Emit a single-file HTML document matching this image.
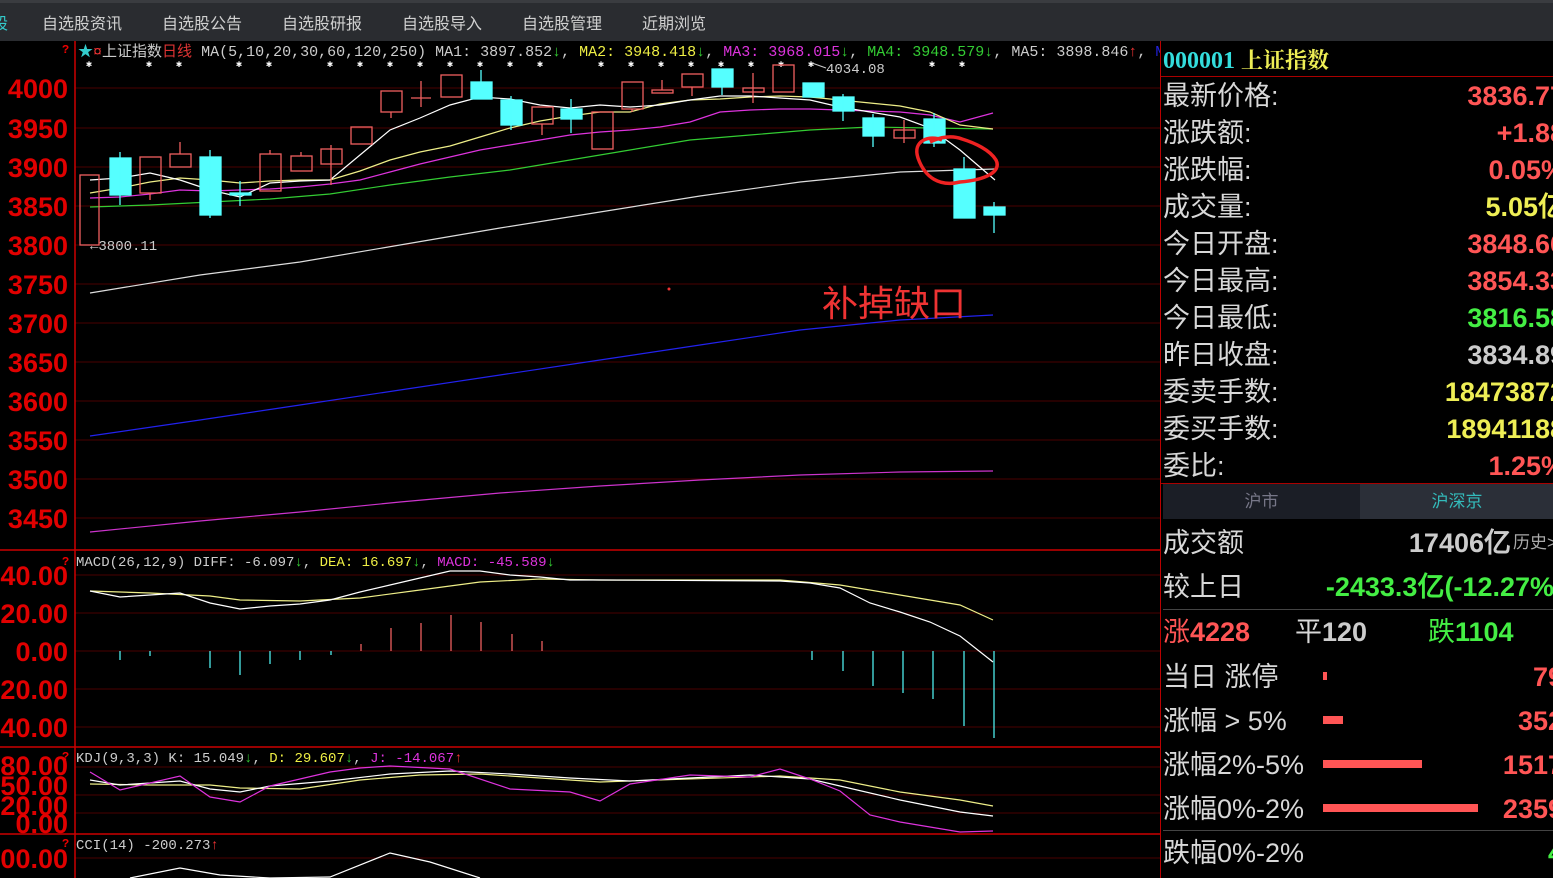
<!DOCTYPE html>
<html><head><meta charset="utf-8"><style>
*{margin:0;padding:0;box-sizing:border-box}
body{width:1553px;height:878px;background:#000;overflow:hidden;position:relative;font-family:"Liberation Sans","Noto Sans CJK SC",sans-serif}
.top{position:absolute;left:0;top:0;width:1553px;height:41px;background:#2a2c30;border-top:3px solid #3a3c40}
.top span{position:absolute;top:7px;font-size:16px;color:#d0d0d0}
.rp{position:absolute;left:1160px;top:41px;width:393px;height:837px;border-left:1px solid #b00;overflow:hidden}
.row{position:absolute;left:2px;width:400px;height:37px;font-size:27px;color:#d8d8d8;line-height:37px}
.row b{position:absolute;right:-2px;top:0;font-family:"Liberation Sans",sans-serif;font-weight:bold;font-size:27px}
</style></head><body>
<div class="top">
<span style="left:-8px;color:#3cc">股</span>
<span style="left:42px">自选股资讯</span><span style="left:162px">自选股公告</span><span style="left:282px">自选股研报</span><span style="left:402px">自选股导入</span><span style="left:522px">自选股管理</span><span style="left:642px">近期浏览</span>
</div>
<svg width="1160" height="837" style="position:absolute;left:0;top:41px" viewBox="0 41 1160 837" font-family="Liberation Mono, Noto Sans CJK SC, monospace">
<g stroke="#4a0000" stroke-width="1">
<line x1="75" y1="88" x2="1160" y2="88"/><line x1="75" y1="128" x2="1160" y2="128"/><line x1="75" y1="167" x2="1160" y2="167"/><line x1="75" y1="206" x2="1160" y2="206"/><line x1="75" y1="245" x2="1160" y2="245"/><line x1="75" y1="284" x2="1160" y2="284"/><line x1="75" y1="323" x2="1160" y2="323"/><line x1="75" y1="362" x2="1160" y2="362"/><line x1="75" y1="401" x2="1160" y2="401"/><line x1="75" y1="440" x2="1160" y2="440"/><line x1="75" y1="479" x2="1160" y2="479"/><line x1="75" y1="518" x2="1160" y2="518"/>
<line x1="75" y1="575" x2="1160" y2="575"/><line x1="75" y1="613" x2="1160" y2="613"/><line x1="75" y1="651" x2="1160" y2="651"/><line x1="75" y1="689" x2="1160" y2="689"/><line x1="75" y1="727" x2="1160" y2="727"/>
<line x1="75" y1="767" x2="1160" y2="767"/><line x1="75" y1="795" x2="1160" y2="795"/><line x1="75" y1="813" x2="1160" y2="813"/><line x1="75" y1="858" x2="1160" y2="858"/>
</g>
<g stroke="#c00" stroke-width="1.5">
<line x1="75" y1="41" x2="75" y2="878"/><line x1="0" y1="550" x2="1160" y2="550"/><line x1="0" y1="747" x2="1160" y2="747"/><line x1="0" y1="834" x2="1160" y2="834"/>
</g>
<g fill="#e00000" font-family="Liberation Sans, sans-serif" font-weight="bold" font-size="27" text-anchor="end">
<text x="68" y="98">4000</text><text x="68" y="138">3950</text><text x="68" y="177">3900</text><text x="68" y="216">3850</text><text x="68" y="255">3800</text><text x="68" y="294">3750</text><text x="68" y="333">3700</text><text x="68" y="372">3650</text><text x="68" y="411">3600</text><text x="68" y="450">3550</text><text x="68" y="489">3500</text><text x="68" y="528">3450</text>
<text x="68" y="585">40.00</text><text x="68" y="623">20.00</text><text x="68" y="661">0.00</text><text x="68" y="699">20.00</text><text x="68" y="737">40.00</text>
<text x="68" y="775">80.00</text><text x="68" y="795">50.00</text><text x="68" y="815">20.00</text><text x="68" y="833">0.00</text><text x="68" y="868">00.00</text>
</g>
<g fill="#e00" font-size="12" font-weight="bold"><text x="62" y="53">?</text><text x="62" y="565">?</text><text x="62" y="760">?</text><text x="62" y="847">?</text></g>
<text x="78" y="56" font-size="15" fill="#ccc"><tspan fill="#3cc">★</tspan><tspan fill="#e33">¤</tspan><tspan fill="#ccc">上证指数</tspan><tspan fill="#d33">日线</tspan> MA(5,10,20,30,60,120,250) MA1: 3897.852<tspan fill="#3c3">↓</tspan>, <tspan fill="#ee4">MA2: 3948.418</tspan><tspan fill="#3c3">↓</tspan>, <tspan fill="#d3d">MA3: 3968.015</tspan><tspan fill="#3c3">↓</tspan>, <tspan fill="#3c3">MA4: 3948.579↓</tspan>, MA5: 3898.846<tspan fill="#e33">↑</tspan>, <tspan fill="#22d">MA6</tspan></text>
<g fill="#fff" font-size="10"><text x="86" y="67">✱</text><text x="146" y="67">✱</text><text x="176" y="67">✱</text><text x="236" y="67">✱</text><text x="266" y="67">✱</text><text x="327" y="67">✱</text><text x="357" y="67">✱</text><text x="387" y="67">✱</text><text x="417" y="67">✱</text><text x="447" y="67">✱</text><text x="477" y="67">✱</text><text x="507" y="67">✱</text><text x="537" y="67">✱</text><text x="598" y="67">✱</text><text x="628" y="67">✱</text><text x="658" y="67">✱</text><text x="688" y="67">✱</text><text x="718" y="67">✱</text><text x="748" y="67">✱</text><text x="778" y="67">✱</text><text x="808" y="67">✱</text><text x="929" y="67">✱</text><text x="959" y="67">✱</text></g>
<text x="826" y="73" font-size="14" fill="#ccc">4034.08</text>
<line x1="812" y1="63" x2="826" y2="68" stroke="#ccc"/>
<text x="90" y="250" font-size="14" fill="#ccc">←3800.11</text>
<g fill="none" stroke-width="1.2">
<polyline stroke="#ddd" points="90,293 200,275 300,262 400,245 500,228 600,212 700,196 800,182 900,172 995,169"/>
<polyline stroke="#22e" points="90,436 200,420 300,405 400,390 500,375 600,360 700,345 800,330 900,320 993,315"/>
<polyline stroke="#c3c" points="90,532 200,521 300,512 400,502 500,493 600,486 700,480 800,475 900,472 993,471"/>
<polyline stroke="#3c3" points="90,207 150,205 210,202 270,199 330,194 390,185 450,177 510,170 570,160 630,150 690,140 750,135 810,130 870,127 930,128 993,129"/>
<polyline stroke="#d3d" points="90,198 120,197 150,194 180,190 210,191 240,190 270,189 300,187 330,184 360,180 390,172 420,164 450,157 480,150 510,145 540,140 570,135 600,132 630,130 660,127 690,122 720,112 750,110 780,109 810,109 840,110 870,111 900,112 930,115 960,122 993,113"/>
<polyline stroke="#ee8" points="90,193 120,188 150,182 180,178 210,180 240,183 270,181 300,180 330,180 360,171 390,160 420,152 450,146 480,137 510,128 540,121 570,116 600,112 630,112 660,104 690,100 720,99 750,97 780,96 810,97 840,100 870,103 900,106 930,112 960,125 993,129"/>
<polyline stroke="#fff" points="90,180 120,178 150,173 180,180 210,190 240,197 270,183 300,181 330,180 360,155 390,130 420,118 450,105 480,97 510,99 540,105 570,108 600,105 630,107 660,105 690,100 720,96 750,96 780,98 810,100 840,107 870,112 900,117 930,128 960,150 995,180"/>
</g>
<g stroke="#f06060" stroke-width="1.3" fill="none">
<rect x="80" y="175" width="19" height="70"/>
<rect x="140" y="157" width="21" height="36"/><line x1="150" y1="193" x2="150" y2="200"/>
<rect x="170" y="154" width="21" height="13"/><line x1="180" y1="142" x2="180" y2="154"/>
<rect x="260" y="154" width="21" height="37"/><line x1="270" y1="150" x2="270" y2="154"/>
<rect x="291" y="156" width="21" height="15"/><line x1="301" y1="152" x2="301" y2="156"/>
<rect x="321" y="149" width="21" height="15"/><line x1="331" y1="145" x2="331" y2="185"/>
<rect x="351" y="127" width="21" height="17"/>
<rect x="381" y="91" width="21" height="21"/><line x1="391" y1="112" x2="391" y2="118"/>
<line x1="411" y1="98" x2="431" y2="98"/><line x1="421" y1="81" x2="421" y2="107"/>
<rect x="441" y="75" width="21" height="22"/>
<rect x="532" y="107" width="21" height="17"/><line x1="542" y1="124" x2="542" y2="135"/>
<rect x="592" y="112" width="21" height="37"/>
<rect x="622" y="82" width="21" height="27"/><line x1="632" y1="109" x2="632" y2="112"/>
<rect x="652" y="90" width="21" height="3"/><line x1="662" y1="80" x2="662" y2="90"/>
<rect x="682" y="74" width="21" height="13"/><line x1="692" y1="87" x2="692" y2="96"/>
<rect x="743" y="88" width="21" height="4"/><line x1="753" y1="73" x2="753" y2="103"/>
<rect x="773" y="65" width="21" height="27"/>
<rect x="894" y="130" width="21" height="8"/><line x1="904" y1="120" x2="904" y2="143"/>
</g>
<g fill="#5ff" stroke="#5ff" stroke-width="1.3">
<rect x="110" y="158" width="21" height="37"/><line x1="120" y1="152" x2="120" y2="205"/>
<rect x="200" y="157" width="21" height="58"/><line x1="210" y1="150" x2="210" y2="218"/>
<rect x="230" y="193" width="21" height="2"/><line x1="240" y1="181" x2="240" y2="206"/>
<rect x="471" y="82" width="21" height="17"/><line x1="481" y1="70" x2="481" y2="82"/>
<rect x="501" y="100" width="21" height="25"/><line x1="511" y1="96" x2="511" y2="130"/>
<rect x="561" y="109" width="21" height="10"/><line x1="571" y1="99" x2="571" y2="133"/>
<rect x="712" y="69" width="21" height="18"/><line x1="722" y1="87" x2="722" y2="95"/>
<rect x="803" y="83" width="21" height="14"/>
<rect x="833" y="97" width="21" height="14"/><line x1="843" y1="94" x2="843" y2="121"/>
<rect x="863" y="118" width="21" height="18"/><line x1="873" y1="114" x2="873" y2="147"/>
<rect x="924" y="119" width="21" height="24"/><line x1="934" y1="113" x2="934" y2="147"/>
<rect x="954" y="169" width="21" height="49"/><line x1="964" y1="157" x2="964" y2="169"/>
<rect x="984" y="207" width="21" height="8"/><line x1="994" y1="202" x2="994" y2="233"/>
</g>
<path d="M942,140 C930,135 912,140 918,158 C925,178 940,187 960,182 C985,180 1002,172 996,160 C990,150 975,143 962,139 C952,135 940,137 930,142" fill="none" stroke="#e22" stroke-width="3.5"/>
<text x="822" y="316" font-family="Liberation Sans, Noto Sans CJK SC, sans-serif" font-size="36" fill="#e33">补掉缺口</text>
<circle cx="669" cy="289" r="1.5" fill="#e33"/>
<text x="76" y="566" font-size="14" fill="#ccc">MACD(26,12,9) DIFF: -6.097<tspan fill="#3c3">↓</tspan>, <tspan fill="#ee4">DEA: 16.697</tspan><tspan fill="#3c3">↓</tspan>, <tspan fill="#d3d">MACD: -45.589</tspan><tspan fill="#3c3">↓</tspan></text>
<g fill="none" stroke-width="1.2">
<polyline stroke="#ee8" points="90,591 150,593 210,596 240,600 300,601 360,598 420,590 480,582 540,579 600,580 780,580 840,585 900,595 960,605 993,620"/>
<polyline stroke="#fff" points="90,591 120,597 150,595 180,593 210,603 240,609 270,606 300,604 330,600 360,592 390,585 420,578 450,571 480,571 510,575 540,577 570,580 600,580 780,581 810,583 840,588 870,603 900,612 930,622 960,636 993,662"/>
</g>
<g stroke="#5ff" stroke-width="1.2">
<line x1="120" y1="651" x2="120" y2="660"/><line x1="150" y1="651" x2="150" y2="656"/><line x1="210" y1="651" x2="210" y2="668"/><line x1="240" y1="651" x2="240" y2="675"/><line x1="270" y1="651" x2="270" y2="664"/><line x1="300" y1="651" x2="300" y2="660"/><line x1="331" y1="651" x2="331" y2="655"/>
<line x1="812" y1="651" x2="812" y2="660"/><line x1="843" y1="651" x2="843" y2="671"/><line x1="873" y1="651" x2="873" y2="686"/><line x1="903" y1="651" x2="903" y2="693"/><line x1="933" y1="651" x2="933" y2="699"/><line x1="964" y1="651" x2="964" y2="726"/><line x1="994" y1="651" x2="994" y2="738"/>
</g>
<g stroke="#f66" stroke-width="1.2">
<line x1="361" y1="651" x2="361" y2="644"/><line x1="391" y1="651" x2="391" y2="628"/><line x1="421" y1="651" x2="421" y2="623"/><line x1="451" y1="651" x2="451" y2="615"/><line x1="481" y1="651" x2="481" y2="622"/><line x1="512" y1="651" x2="512" y2="634"/><line x1="542" y1="651" x2="542" y2="641"/>
</g>
<text x="76" y="762" font-size="14" fill="#ccc">KDJ(9,3,3) K: 15.049<tspan fill="#3c3">↓</tspan>, <tspan fill="#ee4">D: 29.607</tspan><tspan fill="#3c3">↓</tspan>, <tspan fill="#d3d">J: -14.067</tspan><tspan fill="#e33">↑</tspan></text>
<g fill="none" stroke-width="1.2">
<polyline stroke="#ee8" points="90,784 150,785 210,785 240,788 300,789 360,780 420,775 480,774 540,778 600,782 780,776 840,780 900,792 960,800 993,806"/>
<polyline stroke="#fff" points="90,780 120,785 180,781 210,789 240,792 270,786 330,781 390,774 450,771 510,774 570,778 630,781 690,778 750,775 810,779 840,786 900,800 960,812 993,816"/>
<polyline stroke="#d3d" points="90,772 120,790 180,776 210,797 240,802 270,786 330,772 360,768 390,766 450,769 510,789 570,792 600,801 630,784 690,775 750,777 780,769 810,779 840,791 870,815 900,822 960,832 993,831"/>
</g>
<text x="76" y="849" font-size="14" fill="#ccc">CCI(14) -200.273<tspan fill="#e33">↑</tspan></text>
<polyline fill="none" stroke="#fff" stroke-width="1.2" points="130,878 180,868 220,875 270,878 330,877 390,853 430,862 480,878"/>
</svg>
<div class="rp">
<div style="position:absolute;left:2px;top:3px;font-size:24px;font-weight:bold;color:#3dd;font-family:'Liberation Serif',serif">000001 <span style="color:#ee5;font-family:'Liberation Serif','Noto Serif CJK SC',serif;font-size:22px">上证指数</span></div>
<div style="position:absolute;left:0;top:35px;width:393px;border-top:1px solid #a00"></div>
<div class="row" style="top:37px">最新价格:<b style="color:#f55">3836.77</b></div>
<div class="row" style="top:74px">涨跌额:<b style="color:#f55">+1.88</b></div>
<div class="row" style="top:111px">涨跌幅:<b style="color:#f55">0.05%</b></div>
<div class="row" style="top:148px">成交量:<b style="color:#ee5">5.05亿</b></div>
<div class="row" style="top:185px">今日开盘:<b style="color:#f55">3848.66</b></div>
<div class="row" style="top:222px">今日最高:<b style="color:#f55">3854.33</b></div>
<div class="row" style="top:259px">今日最低:<b style="color:#4e4">3816.58</b></div>
<div class="row" style="top:296px">昨日收盘:<b style="color:#ccc">3834.89</b></div>
<div class="row" style="top:333px">委卖手数:<b style="color:#ee5">18473872</b></div>
<div class="row" style="top:370px">委买手数:<b style="color:#ee5">18941188</b></div>
<div class="row" style="top:407px">委比:<b style="color:#f55">1.25%</b></div>
<div style="position:absolute;left:0;top:442px;width:393px;border-top:1px solid #a00"></div>
<div style="position:absolute;left:2px;top:443px;width:197px;height:35px;background:#1b1e26;color:#778;font-size:17px;text-align:center;line-height:35px">沪市</div>
<div style="position:absolute;left:199px;top:443px;width:194px;height:35px;background:#2b2f38;color:#3bb;font-size:17px;text-align:center;line-height:35px">沪深京</div>
<div class="row" style="top:482px;height:40px;line-height:40px">成交额<b style="color:#ccc;right:52px">17406亿</b><span style="position:absolute;left:350px;font-size:17px;color:#aaa">历史&gt;</span></div>
<div class="row" style="top:526px;height:40px;line-height:40px">较上日<b style="color:#4e4;right:0">-2433.3亿(-12.27%)</b></div>
<div style="position:absolute;left:2px;top:568px;width:393px;border-top:1px solid #444"></div>
<div class="row" style="top:571px;height:40px;line-height:40px"><span style="color:#f55">涨<b style="position:static">4228</b></span><span style="position:absolute;left:132px">平<b style="position:static;color:#ccc">120</b></span><span style="position:absolute;left:265px;color:#4e4">跌<b style="position:static">1104</b></span></div>
<div class="row" style="top:614px;height:44px;line-height:44px">当日 涨停<span style="position:absolute;left:160px;top:17px;width:4px;height:8px;background:#f55"></span><b style="color:#f55;right:0">79</b></div>
<div class="row" style="top:658px;height:44px;line-height:44px">涨幅 &gt; 5%<span style="position:absolute;left:160px;top:17px;width:20px;height:8px;background:#f55"></span><b style="color:#f55;right:0">352</b></div>
<div class="row" style="top:702px;height:44px;line-height:44px">涨幅2%-5%<span style="position:absolute;left:160px;top:17px;width:99px;height:8px;background:#f55"></span><b style="color:#f55;right:0">1517</b></div>
<div class="row" style="top:746px;height:44px;line-height:44px">涨幅0%-2%<span style="position:absolute;left:160px;top:17px;width:155px;height:8px;background:#f55"></span><b style="color:#f55;right:0">2359</b></div>
<div style="position:absolute;left:2px;top:789px;width:393px;border-top:1px solid #444"></div>
<div class="row" style="top:790px;height:44px;line-height:44px">跌幅0%-2%<b style="color:#4e4;right:0">4</b></div>
</div>
</body></html>
